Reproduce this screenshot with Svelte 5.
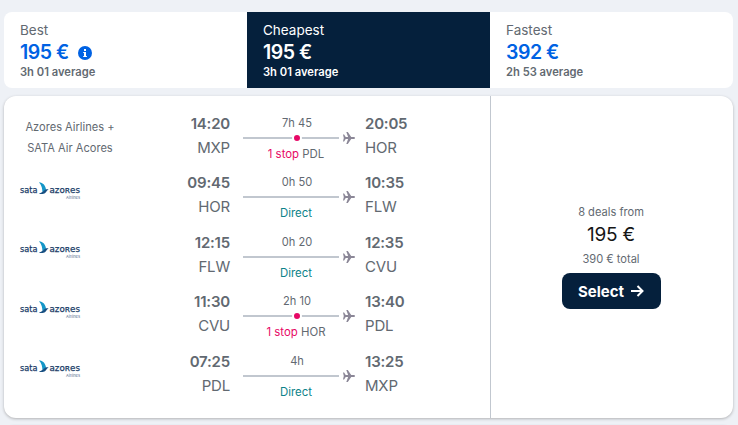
<script lang="ts">
    const tabs = [
        { name: "Best", price: "195 €", average: "3h 01 average", info: true },
        { name: "Cheapest", price: "195 €", average: "3h 01 average", active: true },
        { name: "Fastest", price: "392 €", average: "2h 53 average" }
    ];

    const legs = [
        { from: "MXP", departure: "14:20", to: "HOR", arrival: "20:05", duration: "7h 45", stop: "PDL", carriers: ["Azores Airlines +", "SATA Air Acores"] },
        { from: "HOR", departure: "09:45", to: "FLW", arrival: "10:35", duration: "0h 50" },
        { from: "FLW", departure: "12:15", to: "CVU", arrival: "12:35", duration: "0h 20" },
        { from: "CVU", departure: "11:30", to: "PDL", arrival: "13:40", duration: "2h 10", stop: "HOR" },
        { from: "PDL", departure: "07:25", to: "MXP", arrival: "13:25", duration: "4h" }
    ];
</script>

<div class="page">
    <div class="tabs">
        {#each tabs as tab}
            <button class="tab" class:active={tab.active}>
                <span class="name">{tab.name}</span>
                <span class="price">
                    {tab.price}
                    {#if tab.info}
                        <svg class="info" viewBox="0 0 14 14">
                            <circle cx="7" cy="7" r="7" />
                            <path d="M6 3h2v2H6zM5.2 6H8v4h.9v1H5.2v-1H6V7h-.8z" />
                        </svg>
                    {/if}
                </span>
                <span class="average">{tab.average}</span>
            </button>
        {/each}
    </div>

    <div class="ticket">
        <div class="legs">
            {#each legs as leg}
                <div class="leg">
                    {#if leg.carriers}
                        <div class="carriers">
                            {#each leg.carriers as carrier}
                                <div>{carrier}</div>
                            {/each}
                        </div>
                    {:else}
                        <svg class="logo" viewBox="0 0 60 18">
                            <text class="brand" x="0" y="11" textLength="17.5" lengthAdjust="spacingAndGlyphs">sata</text>
                            <path class="wing" d="M19 .2c4 .4 6.800 3.300 7 7.700l-3.600 2.200C22.400 7 21.800 3.200 19 .2z" />
                            <path class="tail" d="M18.800 11.700c2.600-.6 3.900-2.300 5.600-3.400 1.700-1.200 2.700-1.100 4.300-.8-1.800 .4-2.400 3.600-5.200 4.300-1.700 .5-3.100 .3-4.700-.1z" />
                            <text class="brand" x="29.500" y="11" textLength="30.500" lengthAdjust="spacingAndGlyphs">azoʀes</text>
                            <text class="sub" x="46" y="17" textLength="14" lengthAdjust="spacingAndGlyphs">Airlines</text>
                        </svg>
                    {/if}
                    <div class="point from">
                        <span class="time">{leg.departure}</span>
                        <span class="code">{leg.from}</span>
                    </div>
                    <div class="route">
                        <span class="duration">{leg.duration}</span>
                        <div class="line">
                            {#if leg.stop}<i class="dot"></i>{/if}
                        </div>
                        <span class="stops">
                            {#if leg.stop}
                                <em>1 stop</em> {leg.stop}
                            {:else}
                                <b>Direct</b>
                            {/if}
                        </span>
                    </div>
                    <svg class="plane" viewBox="0 0 12 12">
                        <path d="M0 2.500h1.100L2.700 5h2.400L3.300 0h1.500l3.400 5h2.300c1 0 1.500 .5 1.500 1s-.5 1-1.500 1H8.200l-3.400 5H3.300l1.800-5H2.700L1.100 9.500H0L.8 6z" />
                    </svg>
                    <div class="point">
                        <span class="time">{leg.arrival}</span>
                        <span class="code">{leg.to}</span>
                    </div>
                </div>
            {/each}
        </div>

        <div class="deal">
            <span class="small">8 deals from</span>
            <span class="amount">195 €</span>
            <span class="small total">390 € total</span>
            <button class="select">
                Select
                <svg viewBox="0 0 14 12">
                    <path d="M1 6h11M7.500 1l5 5-5 5" />
                </svg>
            </button>
        </div>
    </div>
    <div class="next"></div>
</div>

<style>
    :global(body) {
        background: #eef1f6;
    }

    .page {
        box-sizing: border-box;
        height: 425px;
        padding: 12px 5px 0 4px;
        overflow: hidden;
        font-family: Inter, "Liberation Sans", sans-serif;
        color: #626971;
    }

    button {
        border: 0;
        font-family: inherit;
        color: inherit;
        text-align: left;
    }

    .tabs {
        display: grid;
        grid-template-columns: 243px 243px 1fr;
        height: 76px;
        border-radius: 8px;
        overflow: hidden;
    }

    .tab {
        display: flex;
        flex-direction: column;
        padding: 9px 16px 0;
        background: #fff;
    }

    .name {
        font-size: 13.5px;
        line-height: 19px;
    }

    .price {
        display: flex;
        align-items: center;
        font-size: 19.5px;
        font-weight: 600;
        line-height: 25px;
        letter-spacing: -0.5px;
        color: #0062e3;
    }

    .info {
        width: 14px;
        height: 14px;
        margin-left: 9px;
        fill: #0062e3;
    }

    .info path {
        fill: #fff;
    }

    .average {
        font-size: 11.2px;
        font-weight: 600;
        line-height: 15px;
    }

    .active {
        background: #05203c;
    }

    .active span {
        color: #fff;
    }

    .ticket {
        display: grid;
        grid-template-columns: 486px 1fr;
        height: 322px;
        margin-top: 8px;
        border-radius: 12px;
        background: #fff;
        box-shadow: 0 1px 3px rgba(37, 32, 31, 0.3);
    }

    .legs {
        padding: 16px 0 0 16px;
    }

    .leg {
        display: grid;
        grid-template-columns: 100px 110px 109px 20px 1fr;
        height: 59.4px;
    }

    .carriers {
        padding-top: 5px;
        font-size: 11.1px;
        line-height: 21px;
        text-align: center;
    }

    .logo {
        width: 60px;
        height: 18px;
        margin-top: 10.5px;
        overflow: visible;
    }

    .brand {
        font-family: "DejaVu Sans", sans-serif;
        font-size: 9.5px;
        fill: #173a66;
        stroke: #173a66;
        stroke-width: 0.25;
    }

    .sub {
        font-size: 4px;
        fill: #52698b;
    }

    .wing {
        fill: #1597c8;
    }

    .tail {
        fill: #174f82;
    }

    .point {
        display: flex;
        flex-direction: column;
        padding-left: 6px;
    }

    .from {
        align-items: flex-end;
        padding: 0;
    }

    .time {
        font-size: 15px;
        font-weight: 600;
        line-height: 24px;
        letter-spacing: -0.2px;
    }

    .code {
        font-size: 15px;
        line-height: 24px;
        letter-spacing: -0.2px;
    }

    .route {
        display: flex;
        flex-direction: column;
        align-items: center;
        width: 96px;
        padding-left: 13px;
    }

    .duration {
        padding: 3px 0 0 12px;
        font-size: 11.1px;
        line-height: 17px;
    }

    .line {
        display: flex;
        justify-content: center;
        align-items: center;
        width: 96px;
        height: 2px;
        margin: 5px 0;
        background: #c1c7cf;
    }

    .dot {
        flex: none;
        width: 6px;
        height: 6px;
        margin-left: 12px;
        border: 2px solid #fff;
        border-radius: 50%;
        background: #e70866;
    }

    .stops {
        padding-left: 10px;
        font-size: 11.4px;
        line-height: 20px;
        white-space: nowrap;
    }

    .stops em {
        font-style: normal;
        color: #e70866;
    }

    .stops b {
        font-weight: 400;
        color: #0c838a;
    }

    .plane {
        width: 12px;
        height: 12px;
        margin: 20px 4px 0;
        fill: #8b8797;
    }

    .deal {
        display: flex;
        flex-direction: column;
        align-items: center;
        padding: 107px 2px 0 0;
        border-left: 1px solid #c1c7cf;
    }

    .small {
        font-size: 11.1px;
        line-height: 18px;
    }

    .amount {
        font-size: 19px;
        line-height: 27px;
        letter-spacing: -0.2px;
        color: #161616;
    }

    .total {
        margin-top: 2px;
    }

    .select {
        display: flex;
        align-items: center;
        justify-content: center;
        gap: 6px;
        width: 99px;
        height: 36px;
        margin-top: 5px;
        padding: 0;
        border-radius: 8px;
        background: #05203c;
        color: #fff;
        font-size: 15px;
        font-weight: 700;
    }

    .select svg {
        width: 14px;
        height: 12px;
        fill: none;
        stroke: #fff;
        stroke-width: 2;
    }

    .next {
        height: 20px;
        margin-top: 6px;
        border-radius: 12px;
        background: #e9edf3;
    }
</style>
